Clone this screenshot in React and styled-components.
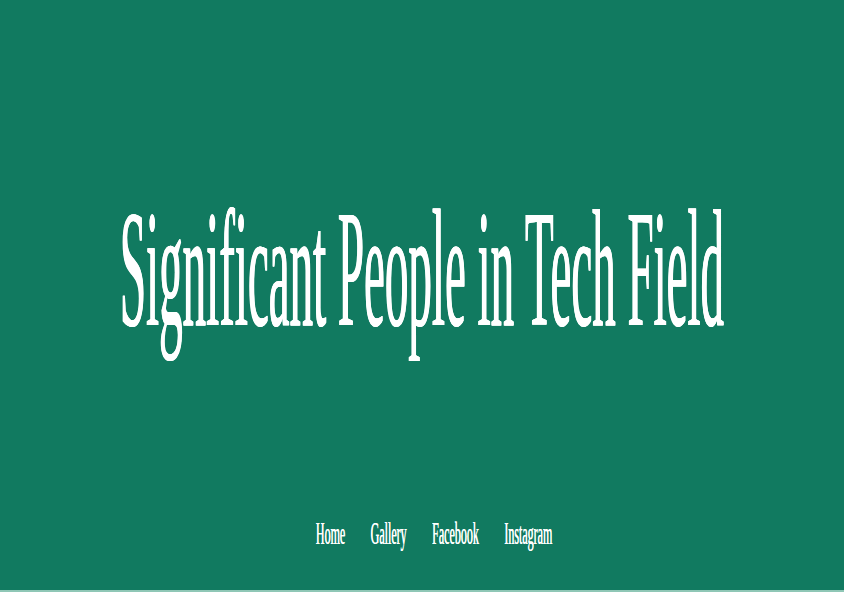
import React from "react";
import styled, { createGlobalStyle } from "styled-components";

const Global = createGlobalStyle`
  html, body { margin: 0; padding: 0; background: #ffffff; overflow: hidden; }
  body { font-family: "Liberation Serif", "Times New Roman", serif; }
`;

const Header = styled.header`
  height: 592px;
  background: #117a60;
  border-bottom: 2px solid #8fc7b6;
  display: flex;
  flex-direction: column;
  align-items: center;
  padding-top: 246px;
  box-sizing: border-box;
`;

const Title = styled.h1`
  margin: 0;
  display: inline-block;
  font-family: "Liberation Serif", "Times New Roman", serif;
  font-weight: 400;
  font-size: 47px;
  line-height: 47px;
  height: 47px;
  color: #ffffff;
  white-space: nowrap;
  text-shadow: 0.3px 0 0 #ffffff, -0.3px 0 0 #ffffff;
  transform: scaleY(3.57);
  transform-origin: center;
`;

const Nav = styled.nav`
  margin-top: 234px;
  padding-left: 24px;
  display: flex;
  gap: 25.5px;
`;

const NavLink = styled.a`
  display: inline-block;
  font-family: "Liberation Serif", "Times New Roman", serif;
  font-size: 12px;
  line-height: 12px;
  height: 12px;
  color: #ffffff;
  text-decoration: none;
  white-space: nowrap;
  text-shadow: 0.2px 0 0 #ffffff;
  transform: scaleY(2.65);
  transform-origin: center;
`;

export default function App() {
  const links = ["Home", "Gallery", "Facebook", "Instagram"];
  return (
    <>
      <Global />
      <Header>
        <Title>Significant People in Tech Field</Title>
        <Nav>
          {links.map((l) => (
            <NavLink key={l} href="#">
              {l}
            </NavLink>
          ))}
        </Nav>
      </Header>
    </>
  );
}
